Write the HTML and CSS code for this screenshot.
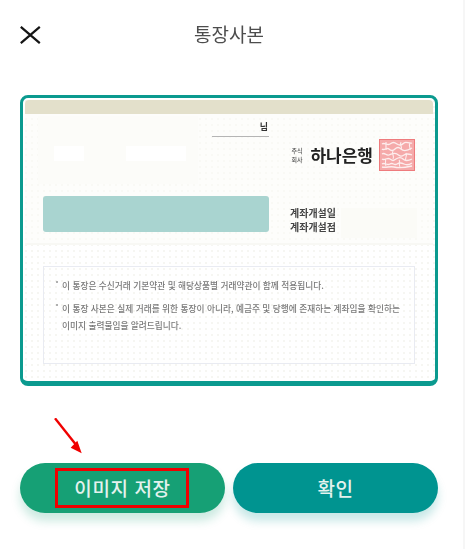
FILE: index.html
```html
<!DOCTYPE html>
<html lang="ko">
<head>
<meta charset="utf-8">
<title>통장사본</title>
<link rel="stylesheet" href="styles.css">
</head>
<body>
<main class="screen">
  <header class="topbar">
    <svg class="close" width="21" height="18" viewBox="0 0 21 18" aria-hidden="true"><path d="M.8.8 19.800 17.200M19.800.8.800 17.200" fill="none" stroke="#151515" stroke-width="2.200"/></svg>
    <h1 class="title">통장사본</h1>
  </header>

  <section class="card">
    <div class="band"></div>
    <div class="upper">
      <div class="mosaic mosaic-name"></div>
      <div class="mosaic mosaic-date"></div>
      <div class="holder">
        <span class="holder-name">님</span>
        <div class="bank">
          <span class="corp">주식<br>회사</span>
          <span class="bank-name">하나은행</span>
          <svg class="seal" width="36" height="32" viewBox="0 0 36 32" aria-hidden="true">
            <rect x=".5" y=".5" width="35" height="31" fill="#f5aaaa" stroke="#ee7b7d"/>
            <path d="M3 5c3-2 5 2 8 0s4-2 7 0 5 1 7-1 5 1 8 0M3 10c2 2 5-2 7 0s4 2 6 0 4-2 6 0 6 2 11-1M3 15c3-2 4 2 7 1s5-3 8-1 4 3 7 1 5-1 8 0M3 20c3 2 5-2 8 0s3 2 6 0 5-2 7 0 5 2 9 0M3 25c3-2 5 2 8 0s4 2 7 0 5-1 7 0 5 1 8-1M3 28c4 1 8-1 12 0s9 1 18-1" fill="none" stroke="#fdeeee" stroke-width="1.300"/>
            <path d="M7 3v8M6 20c2 2-1 4 1 7M14 12c-2 3 2 5 0 8M22 3c-2 3 2 5 0 7M27 14c2 3-2 5 0 8M20 21c2 2-1 4 1 7M31 4c-2 3 1 5 0 7" fill="none" stroke="#fdeeee" stroke-width="1.100"/>
          </svg>
        </div>
      </div>
      <div class="account">
        <div class="account-number"></div>
        <div class="opened">
          <span>계좌개설일</span>
          <span>계좌개설점</span>
        </div>
      </div>
    </div>
    <div class="notes">
      <p class="note">이 통장은 수신거래 기본약관 및 해당상품별 거래약관이 함께 적용됩니다.</p>
      <p class="note">이 통장 사본은 실제 거래를 위한 통장이 아니라, 예금주 및 당행에 존재하는 계좌임을 확인하는<br>이미지 출력물임을 알려드립니다.</p>
    </div>
  </section>

  <div class="actions">
    <button class="btn btn-save" type="button">이미지 저장</button>
    <button class="btn btn-ok" type="button">확인</button>
  </div>

  <svg class="arrow" width="34" height="40" viewBox="0 0 34 40" aria-hidden="true">
    <path d="M2 .3 24 28" stroke="#f00000" stroke-width="2.400" fill="none"/>
    <path d="M28.700 35.300 17.700 29.700 24.300 22.700z" fill="#f00000"/>
  </svg>
  <div class="highlight"></div>
</main>
</body>
</html>
```
FILE: styles.css
```css
* { box-sizing: border-box; }
html, body { margin: 0; padding: 0; background: #fff; }
body {
  font-family: "Noto Sans CJK KR", "Noto Sans", sans-serif;
  overflow: hidden;
}
.screen {
  position: relative;
  width: 465px;
  height: 549px;
  padding: 0 27px 0 20px;
  border-right: 2px solid #f6f6f6;
}
.topbar {
  position: relative;
  height: 95px;
  padding: 23px 0 0 2px;
  display: flex;
  align-items: flex-start;
  justify-content: center;
}
.close { position: absolute; left: 0; top: 26px; }
.title {
  margin: 0;
  font-size: 19px;
  line-height: 22px;
  font-weight: 400;
  color: #4d4d4d;
  filter: blur(.35px);
}
.card {
  width: 418px;
  height: 291px;
  padding: 2px 2px 0;
  border: 3px solid #0b9a8f;
  border-bottom-width: 5px;
  border-radius: 8px;
  background-color: #fff;
  background-image: radial-gradient(circle, #f6f6f2 0 .8px, transparent 1px);
  background-size: 6px 6px;
}
.band {
  height: 14px;
  background: #e3e0cb;
  border-radius: 4px 4px 0 0;
}
.upper {
  position: relative;
  height: 131px;
  padding: 7px 18px 0;
  background: rgba(252, 252, 248, .55);
  border-bottom: 2px solid #f8f8f4;
}
.mosaic { position: absolute; }
.mosaic-name {
  left: 13px;
  top: 2px;
  width: 160px;
  height: 68px;
  background:
    linear-gradient(#fff, #fff) 16px 30px / 30px 15px no-repeat,
    linear-gradient(#fff, #fff) 88px 30px / 60px 15px no-repeat,
    #fcfcf9;
}
.mosaic-date {
  left: 316px;
  top: 94px;
  width: 76px;
  height: 30px;
  background: #fbfbf7;
}
.holder {
  position: relative;
  height: 72px;
  display: flex;
  flex-direction: column;
  align-items: flex-end;
}
.holder-name {
  width: 57px;
  height: 16px;
  margin-right: 146px;
  border-bottom: 1px solid #b5b5b5;
  text-align: right;
  font-size: 9px;
  line-height: 11px;
  font-weight: 700;
  color: #333;
  padding-right: 1px;
  filter: blur(.3px);
}
.bank {
  display: flex;
  align-items: center;
  margin-top: 2px;
}
.corp {
  font-size: 6px;
  line-height: 9px;
  font-weight: 500;
  color: #555;
  margin-right: 8px;
  filter: blur(.3px);
}
.bank-name {
  font-size: 17px;
  line-height: 20px;
  font-weight: 700;
  color: #222;
  margin-right: 6px;
  filter: blur(.3px);
}
.seal { filter: blur(.3px); }
.account {
  position: relative;
  display: flex;
  align-items: center;
  gap: 21px;
}
.account-number {
  width: 226px;
  height: 36px;
  background: #a9d4d0;
  border-radius: 3px;
}
.opened {
  display: flex;
  flex-direction: column;
  padding-top: 13px;
  font-size: 10px;
  line-height: 14px;
  font-weight: 700;
  color: #444;
  filter: blur(.3px);
}
.notes {
  width: 372px;
  height: 98px;
  margin: 21px 0 0 18px;
  padding: 10px 10px 0 18px;
  border: 1px solid #e9ebf2;
}
.note {
  position: relative;
  margin: 0 0 6px;
  font-size: 8.700px;
  line-height: 17px;
  font-weight: 500;
  color: #7a7a7a;
  white-space: nowrap;
  filter: blur(.3px);
}
.note::before {
  content: "";
  position: absolute;
  left: -6px;
  top: 4px;
  width: 2px;
  height: 2px;
  background: #b0b0b0;
}
.actions {
  display: flex;
  gap: 8px;
  width: 418px;
  margin-top: 77px;
}
.btn {
  flex: 1;
  height: 50px;
  border: 0;
  border-radius: 25px;
  font-family: inherit;
  font-size: 19px;
  font-weight: 500;
  letter-spacing: .6px;
  color: #e4f2ee;
  padding: 0 0 2px;
}
.btn-save {
  background: #16a075;
  box-shadow: 0 8px 10px rgba(22, 160, 117, .22);
}
.btn-ok {
  background: #009490;
  box-shadow: 0 8px 10px rgba(0, 148, 144, .22);
}
.arrow { position: absolute; left: 53px; top: 418px; }
.highlight {
  position: absolute;
  left: 55px;
  top: 468px;
  width: 134px;
  height: 40px;
  border: 3px solid #f00000;
}
```
